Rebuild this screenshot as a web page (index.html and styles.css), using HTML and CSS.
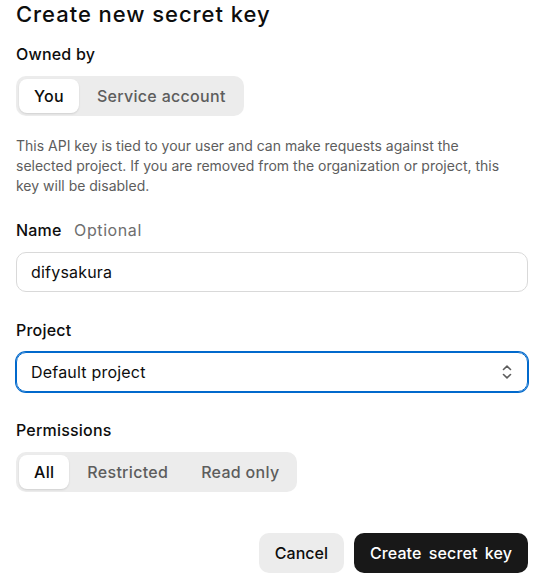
FILE: index.html
```html
<!DOCTYPE html>
<html>
<head>
<meta charset="utf-8">
<link rel="stylesheet" href="styles.css">
</head>
<body>
<div class="dialog">
  <h1 class="title">Create new secret key</h1>

  <div class="label label-owned">Owned by</div>
  <div class="seg">
    <div class="seg-btn active">You</div>
    <div class="seg-btn">Service account</div>
  </div>

  <p class="help">This API key is tied to your user and can make requests against the selected project. If you are removed from the organization or project, this key will be disabled.</p>

  <div class="label label-name">Name <span class="optional">Optional</span></div>
  <div class="input">difysakura</div>

  <div class="label label-gap">Project</div>
  <div class="select">
    <span>Default project</span>
    <svg class="chev" width="16" height="20" viewBox="0 0 16 20" fill="none" stroke="#5d5d5d" stroke-width="1.6" stroke-linecap="round" stroke-linejoin="round">
      <path d="M4.5 7.5 L8 4.2 L11.5 7.5"/>
      <path d="M4.5 12.5 L8 15.8 L11.5 12.5"/>
    </svg>
  </div>

  <div class="label label-gap">Permissions</div>
  <div class="seg">
    <div class="seg-btn active">All</div>
    <div class="seg-btn">Restricted</div>
    <div class="seg-btn">Read only</div>
  </div>

  <div class="actions">
    <div class="btn btn-secondary">Cancel</div>
    <div class="btn btn-primary">Create secret key</div>
  </div>
</div>
</body>
</html>
```

FILE: styles.css
```css
html, body {
  margin: 0;
  padding: 0;
  background: #ffffff;
}
body {
  font-family: Inter, "Noto Sans", "Liberation Sans", sans-serif;
  color: #0d0d0d;
}
.dialog {
  padding: 0 11px 0 16px;
  display: flex;
  flex-direction: column;
  align-items: flex-start;
}
.title {
  margin: 0;
  font-size: 22px;
  line-height: 28px;
  font-weight: 500;
  letter-spacing: 0.95px;
}
.label {
  font-size: 16px;
  line-height: 24px;
  font-weight: 500;
  letter-spacing: 0.2px;
}
.label-owned { margin-top: 14px; }
.label-name { margin-top: 22px; }
.label-gap { margin-top: 26px; }
.optional {
  font-weight: 400;
  color: #6e6e6e;
  margin-left: 8px;
  letter-spacing: 0.6px;
}
.seg {
  margin-top: 10px;
  display: flex;
  gap: 3px;
  padding: 3px;
  background: #ececec;
  border-radius: 10px;
}
.seg-btn {
  height: 34px;
  line-height: 34px;
  padding: 0 15px;
  font-size: 16px;
  font-weight: 500;
  color: #5d5d5d;
  border-radius: 8px;
  letter-spacing: 0.3px;
}
.seg-btn.active {
  background: #ffffff;
  color: #0d0d0d;
  box-shadow: 0 1px 2px rgba(0,0,0,0.12);
}
.help {
  margin: 20px 0 0 0;
  font-size: 14px;
  line-height: 20px;
  color: #5d5d5d;
  max-width: 500px;
}
.input {
  margin-top: 10px;
  align-self: stretch;
  box-sizing: border-box;
  height: 40px;
  line-height: 38px;
  border: 1px solid #d9d9d9;
  border-radius: 10px;
  padding: 0 14px;
  font-size: 16px;
  letter-spacing: 0.2px;
}
.select {
  margin-top: 10px;
  align-self: stretch;
  box-sizing: border-box;
  height: 40px;
  border: 1px solid #0169cc;
  box-shadow: 0 0 0 1px #0169cc;
  border-radius: 10px;
  padding: 0 12px 0 14px;
  font-size: 16px;
  letter-spacing: 0.2px;
  display: flex;
  align-items: center;
  justify-content: space-between;
}
.chev { display: block; }
.actions {
  margin-top: 41px;
  align-self: stretch;
  display: flex;
  justify-content: flex-end;
  gap: 10px;
}
.btn {
  height: 40px;
  line-height: 40px;
  padding: 0 16px;
  border-radius: 10px;
  font-size: 16px;
  font-weight: 500;
}
.btn-secondary {
  background: #ececec;
  color: #0d0d0d;
}
.btn-primary {
  background: #181818;
  color: #ffffff;
  word-spacing: 3px;
  letter-spacing: 0.1px;
}
```
